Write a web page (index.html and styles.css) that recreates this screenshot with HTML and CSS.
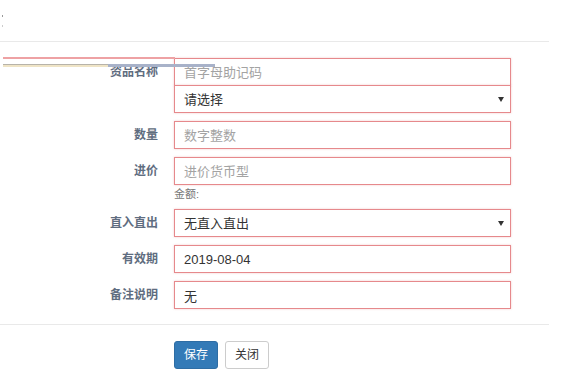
FILE: index.html
```html
<!DOCTYPE html>
<html lang="zh">
<head>
<meta charset="utf-8">
<link rel="stylesheet" href="styles.css">
</head>
<body>
<div class="modal">
  <div class="modal-header">
    <span class="mark mark-a"></span>
    <span class="mark mark-b"></span>
  </div>
  <div class="modal-body">
    <div class="glitch glitch-red"></div>
    <div class="glitch glitch-beige"></div>
    <div class="glitch glitch-blue"></div>
    <div class="row">
      <label class="label">资品名称</label>
      <div class="field stack">
        <input class="ctrl" type="text" placeholder="首字母助记码">
        <div class="select-wrap joined">
          <select class="ctrl"><option>请选择</option></select>
          <span class="caret"></span>
        </div>
      </div>
    </div>
    <div class="row">
      <label class="label">数量</label>
      <div class="field"><input class="ctrl" type="text" placeholder="数字整数"></div>
    </div>
    <div class="row">
      <label class="label">进价</label>
      <div class="field">
        <input class="ctrl" type="text" placeholder="进价货币型">
        <div class="help">金额:</div>
      </div>
    </div>
    <div class="row">
      <label class="label">直入直出</label>
      <div class="field">
        <div class="select-wrap">
          <select class="ctrl"><option>无直入直出</option></select>
          <span class="caret"></span>
        </div>
      </div>
    </div>
    <div class="row">
      <label class="label">有效期</label>
      <div class="field"><input class="ctrl" type="text" value="2019-08-04"></div>
    </div>
    <div class="row">
      <label class="label">备注说明</label>
      <div class="field"><input class="ctrl" type="text" value="无"></div>
    </div>
  </div>
  <div class="modal-footer">
    <button class="btn btn-primary">保存</button>
    <button class="btn btn-default">关闭</button>
  </div>
</div>
</body>
</html>
```
FILE: styles.css
```css
* { box-sizing: border-box; }
html, body { margin: 0; padding: 0; background: #fff; }
body {
  font-family: "Liberation Sans", "Noto Sans CJK SC", sans-serif;
  font-size: 13px;
  color: #333;
}
.modal { width: 549px; }
.modal-header {
  position: relative;
  height: 42px;
  border-bottom: 1px solid #e9e9e9;
}
.mark { position: absolute; left: 2px; width: 1px; height: 2px; background: #999; }
.mark-a { top: 15px; }
.mark-b { top: 25px; background: #ccc; }

.modal-body {
  position: relative;
  padding: 16px 0 15px 0;
  display: flex;
  flex-direction: column;
  gap: 8px;
}
.glitch { position: absolute; z-index: 2; }
.glitch-red { left: 3px; width: 172px; top: 15px; height: 2px; background: #eea2a4; }
.glitch-beige { left: 3px; width: 105px; top: 22px; height: 3px; background: #efe4c6; border-top: 1px solid #b7b3a9; }
.glitch-blue { left: 108px; width: 107px; top: 22px; height: 3px; background: #a8b2c9; }

.row { display: flex; align-items: flex-start; }
.label {
  width: 158px;
  margin-right: 16px;
  text-align: right;
  line-height: 28px;
  font-size: 12px;
  font-weight: bold;
  color: #5f6d80;
}
.field { width: 337px; display: flex; flex-direction: column; }
.ctrl {
  display: block;
  width: 100%;
  height: 28px;
  margin: 0;
  padding: 0 9px;
  border: 1px solid #e6898c;
  border-radius: 0;
  box-shadow: 0 0 2px rgba(230, 137, 140, 0.45);
  background: #fff;
  font-family: "Liberation Sans", "Noto Sans CJK SC", sans-serif;
  font-size: 13px;
  color: #333;
  outline: none;
  appearance: none;
  -webkit-appearance: none;
}
.ctrl::placeholder { color: #a3a3a3; }
.select-wrap { position: relative; }
.joined { margin-top: -1px; }
.caret {
  position: absolute;
  right: 7px;
  top: 12px;
  width: 0;
  height: 0;
  border-left: 3px solid transparent;
  border-right: 3px solid transparent;
  border-top: 5px solid #333;
}
.help {
  margin-top: 1px;
  margin-bottom: -1px;
  line-height: 16px;
  font-size: 11px;
  color: #777;
}
.modal-footer {
  border-top: 1px solid #e9e9e9;
  padding: 16px 0 0 174px;
  display: flex;
  gap: 7px;
}
.btn {
  height: 28px;
  padding: 0 9px;
  border-radius: 3px;
  font-family: "Liberation Sans", "Noto Sans CJK SC", sans-serif;
  font-size: 12px;
  line-height: 26px;
  cursor: pointer;
}
.btn-primary { background: #337ab7; border: 1px solid #2e6da4; color: #fff; }
.btn-default { background: #fff; border: 1px solid #ccc; color: #333; }
```
